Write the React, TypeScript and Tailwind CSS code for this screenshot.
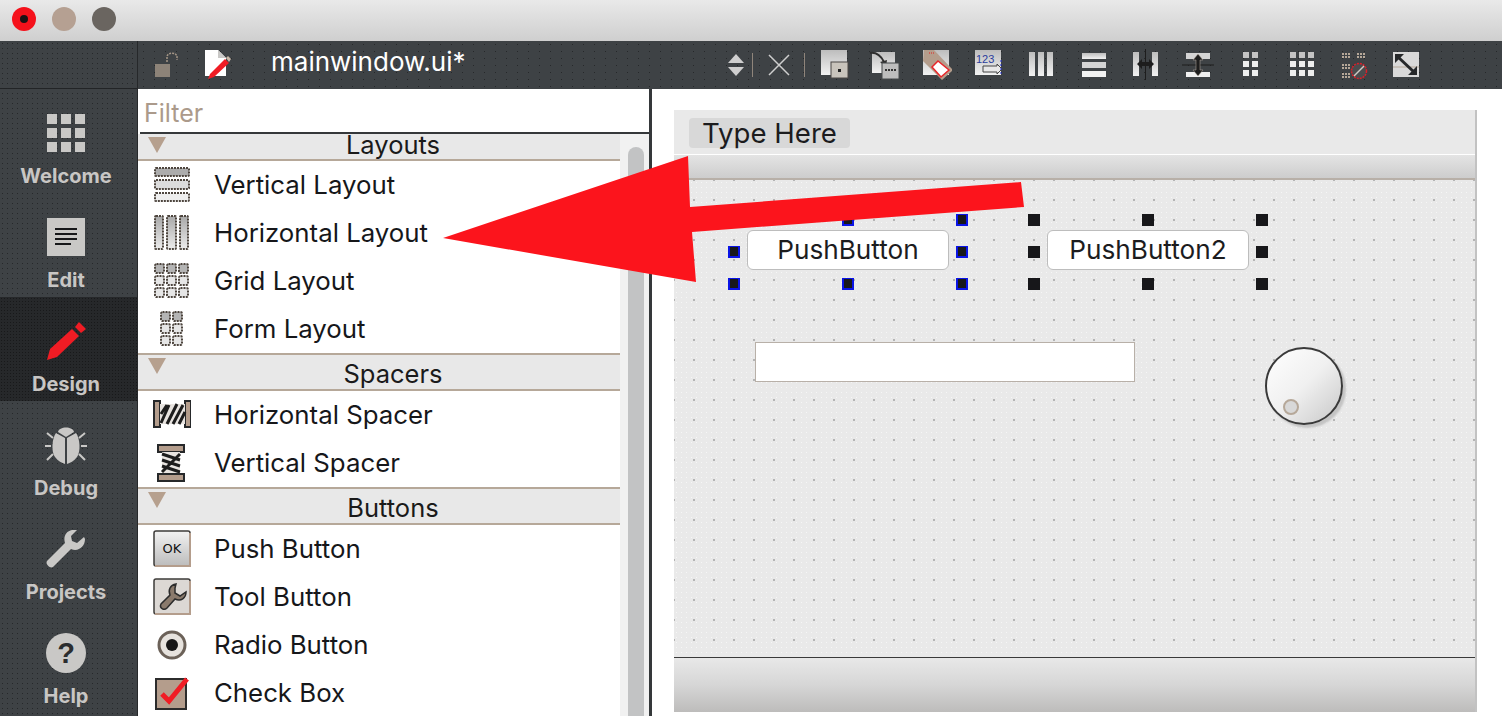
const sans = "font-['Inter','Liberation_Sans',sans-serif]";

function Traffic({ className, children }: { className: string; children?: React.ReactNode }) {
  return <div className={`flex h-6 w-6 items-center justify-center rounded-full ${className}`}>{children}</div>;
}

/* sidebar icons */
function WelcomeIcon() {
  return (
    <div className="grid h-[38px] w-[38px] grid-cols-3 gap-1">
      {[0, 1, 2, 3, 4, 5, 6, 7, 8].map((i) => (
        <div key={i} className="bg-[#c9c8c6]" />
      ))}
    </div>
  );
}

function EditIcon() {
  return (
    <svg width="38" height="38" viewBox="0 0 38 38">
      <rect width="38" height="38" fill="#c9c8c6" />
      <path d="M8 11h22M8 16h22M8 21h22M8 26h16" stroke="#17181a" strokeWidth="2" />
    </svg>
  );
}

function PencilIcon() {
  return (
    <svg width="40" height="40" viewBox="0 0 40 40">
      <path d="M1 39 L4 28 L26 8 L33 15 L11 36 Z" fill="#f01c24" />
      <path d="M29 6 L33 1 L40 8 L35 12 Z" fill="#f01c24" />
    </svg>
  );
}

function BugIcon() {
  return (
    <svg width="42" height="42" viewBox="0 0 42 42">
      <path d="M13 8 C14 2 28 2 29 8 L21 13 Z" fill="#c9c8c6" />
      <path d="M20 14 L11 9 C7 14 6 28 10 33 C13 37 17 39 20 40 Z" fill="#c9c8c6" />
      <path d="M22 14 L31 9 C35 14 36 28 32 33 C29 37 25 39 22 40 Z" fill="#c9c8c6" />
      <path d="M8 14 L2 9 M6 22 H0 M8 30 L2 36 M34 14 L40 9 M36 22 H42 M34 30 L40 36" stroke="#c9c8c6" strokeWidth="2" />
    </svg>
  );
}

function WrenchIcon() {
  return (
    <svg width="40" height="40" viewBox="0 0 40 40">
      <path
        d="M26 1 C20 2 17 8 19 14 L1 32 C-1 35 4 40 7 38 L25 20 C32 23 39 18 39 10 L38 8 L31 14 L26 12 L25 7 L31 1 Z"
        fill="#c9c8c6"
      />
    </svg>
  );
}

function HelpIcon() {
  return (
    <div className="flex h-10 w-10 items-center justify-center rounded-full bg-[#c9c8c6] font-['Liberation_Sans',sans-serif] text-[29px] leading-none font-bold text-[#2b2d2f]">
      ?
    </div>
  );
}

/* toolbar icons, 32px boxes */
function ToolIcon({ children, className }: { children: React.ReactNode; className: string }) {
  return (
    <div className={`flex shrink-0 justify-center ${className}`}>
      <svg width="32" height="32" viewBox="0 0 32 32">
        <defs>
          <linearGradient id="tb" x1="0" y1="0" x2="0" y2="1">
            <stop offset="0" stopColor="#bdbdbd" />
            <stop offset="1" stopColor="#f2f2f2" />
          </linearGradient>
        </defs>
        {children}
      </svg>
    </div>
  );
}

const toolbarIcons = [
  <>
    <rect x="3" y="1" width="26" height="25" fill="url(#tb)" />
    <rect x="13" y="13" width="17" height="16" fill="#c9c4bc" stroke="#4a4644" />
    <rect x="20" y="20" width="3" height="3" fill="#222" />
  </>,
  <>
    <rect x="3" y="3" width="23" height="21" fill="url(#tb)" />
    <path d="M1 4 C8 3 12 7 15 13" stroke="#2f2f2f" strokeWidth="2" fill="none" />
    <path d="M11 13 L18 11 L17 18 Z" fill="#2f2f2f" />
    <rect x="13" y="14" width="17" height="16" fill="#bdbdbd" stroke="#45484a" />
    <path d="M16 21 H27" stroke="#333" strokeWidth="2" strokeDasharray="2 1" />
  </>,
  <>
    <rect x="3" y="1" width="26" height="25" fill="url(#tb)" />
    <path d="M4 1 H14 L33 21 L22 31 L3 12 Z" fill="#b49d8c" />
    <path d="M9 4 H15" stroke="#e02020" strokeDasharray="1 1" />
    <path d="M18 12 L29 21 L21 28 L12 18 Z" fill="#fff" stroke="#e8262a" strokeWidth="1.5" />
  </>,
  <>
    <rect x="3" y="1" width="26" height="25" fill="url(#tb)" />
    <text x="4" y="14" fontSize="11" fill="#2a3c9c" fontFamily="Liberation Sans">123</text>
    <path d="M11 17 H25 V15 L30 20 L25 25 V23 H11 Z" fill="#e8e8e8" stroke="#444" />
    <path d="M29 11 V25" stroke="#2030d0" strokeDasharray="2 2" />
  </>,
  <>
    <rect x="4" y="3" width="6" height="24" fill="url(#tb)" />
    <rect x="13" y="3" width="6" height="24" fill="url(#tb)" />
    <rect x="22" y="3" width="6" height="24" fill="url(#tb)" />
  </>,
  <>
    <rect x="4" y="4" width="24" height="6" fill="url(#tb)" />
    <rect x="4" y="13" width="24" height="6" fill="#d4d4d4" />
    <rect x="4" y="22" width="24" height="6" fill="#f2f2f2" />
  </>,
  <>
    <rect x="3" y="3" width="6" height="24" fill="url(#tb)" />
    <rect x="22" y="3" width="6" height="24" fill="url(#tb)" />
    <path d="M15.5 0 V31" stroke="#1d1d1d" />
    <path d="M7 15 L12 10 V13 H19 V10 L24 15 L19 20 V17 H12 V20 Z" fill="#1d1d1d" />
  </>,
  <>
    <rect x="4" y="4" width="24" height="6" fill="#d4d4d4" />
    <rect x="4" y="23" width="24" height="5" fill="#f0f0f0" />
    <path d="M0 16 H32" stroke="#1d1d1d" />
    <path d="M16 5 L21 11 H18 V21 H21 L16 27 L11 21 H14 V11 H11 Z" fill="#1d1d1d" stroke="#b8aca0" strokeWidth="0.5" />
  </>,
  <>
    {[3, 12, 21].map((y) =>
      [9, 18].map((x) => <rect key={`${x}-${y}`} x={x} y={y} width="6" height="6" fill={y === 3 ? "#c4c4c4" : "#eeeeee"} />),
    )}
  </>,
  <>
    {[3, 12, 21].map((y) =>
      [4, 13, 22].map((x) => <rect key={`${x}-${y}`} x={x} y={y} width="6" height="6" fill={y === 3 ? "#c4c4c4" : "#eeeeee"} />),
    )}
  </>,
  <>
    <path d="M4 5 H13 M4 8 H13 M19 5 H28 M19 8 H28 M4 16 H13 M4 19 H13 M4 25 H12 M4 28 H12" stroke="#b6a899" strokeWidth="2" strokeDasharray="2 1" />
    <circle cx="21" cy="22" r="7.5" fill="#4a4c4e" stroke="#d8202a" strokeWidth="1.5" strokeDasharray="2 1" />
    <path d="M16 27 L26 17" stroke="#cfcac4" strokeWidth="1.5" />
  </>,
  <>
    <rect x="3" y="3" width="26" height="25" fill="#d9d9d9" />
    <path d="M3 18 H29" stroke="#b6a899" />
    <path d="M7 7 L25 24" stroke="#26282a" strokeWidth="3" />
    <path d="M5 5 H14 L5 14 Z M27 26 H18 L27 17 Z" fill="#26282a" />
  </>,
];

/* palette icons */
const dash = { stroke: "#4d453e", strokeWidth: 2, strokeDasharray: "2 1" };

function PaletteDefs() {
  return (
    <defs>
      <linearGradient id="pal" x1="0" y1="0" x2="0" y2="1">
        <stop offset="0" stopColor="#a8a8a8" />
        <stop offset="1" stopColor="#ececec" />
      </linearGradient>
      <linearGradient id="pal2" x1="0" y1="0" x2="0" y2="1">
        <stop offset="0" stopColor="#f2f2f2" />
        <stop offset="1" stopColor="#bcbcbc" />
      </linearGradient>
    </defs>
  );
}

function CellGrid({ cols }: { cols: number[] }) {
  return (
    <>
      {[2, 14, 26].map((y) =>
        cols.map((x) => (
          <rect key={`${x}-${y}`} x={x} y={y} width="9" height="9" rx="1.5" fill={y === 2 ? "#b4b4b4" : "#e6e6e6"} {...dash} />
        )),
      )}
    </>
  );
}

const paletteIcons: Record<string, React.ReactNode> = {
  vertical: (
    <>
      <rect x="2" y="2" width="34" height="8" rx="1" fill="#acacac" {...dash} />
      <rect x="2" y="14" width="34" height="9" rx="1" fill="#dcdcdc" {...dash} />
      <rect x="2" y="27" width="34" height="8" rx="1" fill="#eeeeee" {...dash} />
    </>
  ),
  horizontal: (
    <>
      <rect x="2" y="2" width="8" height="33" rx="1" fill="url(#pal)" {...dash} />
      <rect x="14" y="2" width="9" height="33" rx="1" fill="url(#pal)" {...dash} />
      <rect x="27" y="2" width="8" height="33" rx="1" fill="url(#pal)" {...dash} />
    </>
  ),
  grid: <CellGrid cols={[2, 14, 26]} />,
  form: <CellGrid cols={[8, 20]} />,
  hspacer: (
    <>
      <rect x="1" y="5" width="6" height="26" fill="#b49d8c" stroke="#26282a" strokeWidth="2" />
      <rect x="32" y="5" width="6" height="26" fill="#b49d8c" stroke="#26282a" strokeWidth="2" />
      <path d="M7 8 H32 V28 H7 Z" fill="#e8e4e0" />
      <path d="M8 27 L16 9 M8 18 L14 9 M14 28 L24 8 M20 28 L30 9 M26 28 L32 16" stroke="#1d1d1d" strokeWidth="3" />
    </>
  ),
  vspacer: (
    <>
      <rect x="5" y="1" width="26" height="7" fill="#b49d8c" stroke="#26282a" strokeWidth="2" />
      <rect x="5" y="30" width="26" height="7" fill="#b49d8c" stroke="#26282a" strokeWidth="2" />
      <path d="M9 8 H27 V29 H9 Z" fill="#e8e4e0" />
      <path d="M9 10 L27 16 M9 16 L27 22 M9 22 L27 28 M9 28 L27 10" stroke="#1d1d1d" strokeWidth="3" />
    </>
  ),
  push: (
    <>
      <rect x="1" y="1" width="36" height="35" rx="2" fill="url(#pal2)" stroke="#3d3b39" strokeWidth="1.5" />
      <path d="M2 36 H37 V3" stroke="#b49d8c" strokeWidth="2" fill="none" />
      <text x="19" y="23" fontSize="13" textAnchor="middle" fill="#111" fontFamily="DejaVu Sans">OK</text>
    </>
  ),
  tool: (
    <>
      <rect x="1" y="1" width="36" height="35" rx="2" fill="#dcd8d4" stroke="#3d3b39" strokeWidth="1.5" />
      <path d="M2 36 H37 V3" stroke="#b49d8c" strokeWidth="2" fill="none" />
      <path d="M23 6 C17 7 15 12 17 17 L8 26 C6 30 11 33 14 30 L22 21 C28 24 33 20 33 14 L27 18 L22 15 L22 10 Z" fill="#8a7a6c" stroke="#2c2c2c" strokeWidth="1.5" />
    </>
  ),
  radio: (
    <>
      <circle cx="19" cy="19" r="13" fill="#e6e2dd" stroke="#6b6158" strokeWidth="3" />
      <circle cx="19" cy="19" r="6" fill="#161616" />
    </>
  ),
  check: (
    <>
      <rect x="3" y="5" width="30" height="30" fill="#b49d8c" stroke="#2c2c2c" strokeWidth="2" />
      <path d="M9 20 L16 27 L34 5" stroke="#f01c24" strokeWidth="5" fill="none" />
    </>
  ),
};

function PaletteItem({ icon, label }: { icon: string; label: string }) {
  return (
    <div className="flex h-12 items-center">
      <div className="flex w-[68px] shrink-0 justify-center">
        <svg width="38" height="38" viewBox="0 0 38 38">
          <PaletteDefs />
          {paletteIcons[icon]}
        </svg>
      </div>
      <span className="ml-[8px] text-[25.8px] leading-none text-[#16171a]">{label}</span>
    </div>
  );
}

function SectionHeader({ label, first }: { label: string; first?: boolean }) {
  return (
    <div
      className={`relative flex items-center justify-center border-b-2 border-[#b6a899] bg-[#e8e8e8] pl-[28px] text-[25.5px] leading-none text-[#1a1a1a] ${
        first ? "h-[27px] pb-[4px]" : "h-[38px] border-t-2 pt-[3px]"
      }`}
    >
      <svg className="absolute top-[3px] left-[10px]" width="18" height="16" viewBox="0 0 18 16">
        <path d="M0 0 H18 L9 16 Z" fill="#b6a08e" />
      </svg>
      {label}
    </div>
  );
}

function SideItem({ label, active, children }: { label: string; active?: boolean; children: React.ReactNode }) {
  return (
    <div
      className={`flex h-[104px] flex-col items-center justify-start pt-[24px] pr-[5px] ${
        active ? "bg-[#26282a] bg-[radial-gradient(#18191a_0.6px,transparent_0.8px)] bg-size-[3px_3px]" : ""
      }`}
    >
      <div className="flex h-[40px] items-center justify-center">{children}</div>
      <span className="mt-[11px] text-[20px] leading-[24px] font-bold text-[#c8c6c4]">{label}</span>
    </div>
  );
}

function Handle({ x, y, blue }: { x: number; y: number; blue?: boolean }) {
  return (
    <div
      className={`absolute h-3 w-3 bg-[#17171a] ${blue ? "border-2 border-t border-[#0a14e6]" : ""}`}
      style={{ left: x - 6, top: y - 6 }}
    />
  );
}

function FormButton({ className, label }: { className: string; label: string }) {
  return (
    <div className={`absolute flex h-10 items-center justify-center rounded-md border border-[#bdbdbd] bg-white text-[26.2px] leading-none text-[#1c1c1e] ${className}`}>
      {label}
    </div>
  );
}

export default function App() {
  const handleXs = [734, 848, 962];
  const handleXs2 = [1034, 1148, 1262];
  const handleYs = [220, 252, 284];
  // selection handles sit on the box corners and edge midpoints, never the centre
  const onBox = (x: number, y: number, xs: number[]) => !(x === xs[1] && y === handleYs[1]);

  return (
    <div className={`relative flex h-[716px] w-[1502px] flex-col overflow-hidden bg-white ${sans}`}>
      {/* Title bar */}
      <div className="flex h-[41px] shrink-0 items-start gap-4 bg-gradient-to-b from-[#e9e9e9] to-[#cfcfcf] pt-[7px] pl-3">
        <Traffic className="bg-[#f5111b]">
          <div className="h-2 w-2 rounded-full bg-[#1c1214]" />
        </Traffic>
        <Traffic className="bg-[#b5a092]" />
        <Traffic className="bg-[#6a6560]" />
      </div>

      <div className="flex min-h-0 flex-1">
        {/* Mode sidebar */}
        <div className="w-[137px] shrink-0 bg-[#3e4245] bg-[radial-gradient(#26282a_0.6px,transparent_0.8px)] bg-size-[5px_5px]">
          <div className="h-12 border-b border-[#222426]" />
          <SideItem label="Welcome">
            <WelcomeIcon />
          </SideItem>
          <SideItem label="Edit">
            <EditIcon />
          </SideItem>
          <SideItem label="Design" active>
            <PencilIcon />
          </SideItem>
          <SideItem label="Debug">
            <BugIcon />
          </SideItem>
          <SideItem label="Projects">
            <WrenchIcon />
          </SideItem>
          <SideItem label="Help">
            <HelpIcon />
          </SideItem>
        </div>

        <div className="flex min-w-0 flex-1 flex-col border-l border-[#26282a]">
          {/* Toolbar */}
          <div className="flex h-12 shrink-0 items-center bg-[#3e4245] bg-[radial-gradient(#26282a_0.7px,transparent_0.9px)] bg-size-[11px_7px]">
            <svg className="ml-[16px]" width="24" height="26" viewBox="0 0 24 26">
              <rect x="1" y="12" width="15" height="13" fill="#8d8378" />
              <path d="M4 12 V8 C4 5 13 5 13 8 V12" stroke="#3e4245" fill="none" />
              <path d="M13 10 V5 C13 0 23 0 23 5 V8" stroke="#a59687" strokeWidth="1.5" strokeDasharray="2 1" fill="none" />
            </svg>
            <svg className="ml-[26px]" width="28" height="30" viewBox="0 0 28 30">
              <path d="M1 0 H14 L22 8 V26 H1 Z" fill="#ffffff" />
              <path d="M14 0 V8 H22 Z" fill="#c9c8c6" />
              <path d="M4 29 L6 24 L21 9 L25 13 L10 27 Z" fill="#f01c24" />
              <path d="M22 8 L24 6 L27 9 L25 12 Z" fill="#c9b8a8" />
            </svg>
            <span className="ml-[39px] w-[188px] shrink-0 -translate-y-[3px] text-[26px] leading-none whitespace-nowrap text-white">
              mainwindow.ui*
            </span>
            <svg className="ml-[269px]" width="16" height="24" viewBox="0 0 16 24">
              <path d="M8 1 L16 10 H0 Z" fill="#cfcfcf" />
              <path d="M0 14 H16 L8 23 Z" fill="#cfcfcf" />
            </svg>
            <div className="ml-[8px] h-6 w-px bg-[#8f857b]" />
            <svg className="ml-[15px]" width="22" height="22" viewBox="0 0 22 22">
              <path d="M1 1 L21 21 M21 1 L1 21" stroke="#cfcfcf" strokeWidth="1.5" />
            </svg>
            <div className="ml-[14px] h-6 w-px bg-[#8f857b]" />
            <div className="ml-[3px] flex">
              {toolbarIcons.map((icon, i) => (
                <ToolIcon key={i} className={i < 3 ? "w-[51px]" : i < 6 ? "w-[53px]" : "w-[52px]"}>
                  {icon}
                </ToolIcon>
              ))}
            </div>
          </div>

          <div className="flex min-h-0 flex-1">
            {/* Widget box */}
            <div className="flex w-[514px] shrink-0 flex-col border-r-[3px] border-[#35383a] bg-white">
              <div className="mt-[2px] ml-[2px] flex h-[43px] shrink-0 items-center border-b-[2px] border-[#35383a] pt-[4px] pl-[4px] text-[25px] leading-none text-[#ab9a8b]">
                Filter
              </div>
              <div className="flex min-h-0 flex-1">
                <div className="w-[482px] shrink-0">
                  <SectionHeader label="Layouts" first />
                  <PaletteItem icon="vertical" label="Vertical Layout" />
                  <PaletteItem icon="horizontal" label="Horizontal Layout" />
                  <PaletteItem icon="grid" label="Grid Layout" />
                  <PaletteItem icon="form" label="Form Layout" />
                  <SectionHeader label="Spacers" />
                  <PaletteItem icon="hspacer" label="Horizontal Spacer" />
                  <PaletteItem icon="vspacer" label="Vertical Spacer" />
                  <SectionHeader label="Buttons" />
                  <PaletteItem icon="push" label="Push Button" />
                  <PaletteItem icon="tool" label="Tool Button" />
                  <PaletteItem icon="radio" label="Radio Button" />
                  <PaletteItem icon="check" label="Check Box" />
                </div>
                {/* Scrollbar */}
                <div className="flex-1 bg-[#f1f1f1] pt-[13px] pl-[8px]">
                  <div className="h-full w-[16px] rounded-t-lg bg-[#c2c3c4]" />
                </div>
              </div>
            </div>

            {/* Form canvas */}
            <div className="min-w-0 flex-1 pt-[21px] pl-[22px]">
              <div className="flex h-[602px] w-[803px] flex-col border-r-2 border-[#c2c2c2] bg-[#e9e9e9]">
                <div className="flex h-[45px] shrink-0 items-start border-b border-white pt-[8px] pl-[15px]">
                  <div className="flex h-[30px] w-[161px] items-center rounded-sm bg-[#d8d8d8] pt-px pl-[13px] text-[27.6px] leading-none text-[#1c1c1e]">
                    Type Here
                  </div>
                </div>
                <div className="h-[25px] shrink-0 border-b-2 border-[#b8b0a8] bg-gradient-to-b from-[#e4e4e4] to-[#cdcdcd]" />
                <div className="min-h-0 flex-1 bg-[radial-gradient(circle,#b4b4b4_1.2px,transparent_1.3px),radial-gradient(circle,#f6f6f6_0.7px,transparent_0.9px)] bg-size-[20px_20px,5px_5px] bg-position-[10px_10px,0_0]" />
                <div className="h-[55px] shrink-0 border-t border-[#3a3a3a] bg-gradient-to-b from-[#e8e8e8] via-[#d6d6d6] to-[#bdbcbb]" />
              </div>
            </div>
          </div>
        </div>
      </div>

      {/* Designer widgets on the form */}
      <FormButton className="top-[230px] left-[747px] w-[202px]" label="PushButton" />
      <FormButton className="top-[230px] left-[1047px] w-[202px]" label="PushButton2" />
      {handleYs.map((y) =>
        handleXs.filter((x) => onBox(x, y, handleXs)).map((x) => <Handle key={`${x}-${y}`} x={x} y={y} blue />),
      )}
      {handleYs.map((y) =>
        handleXs2.filter((x) => onBox(x, y, handleXs2)).map((x) => <Handle key={`${x}-${y}`} x={x} y={y} />),
      )}
      <div className="absolute top-[342px] left-[755px] h-10 w-[380px] border border-[#b8b0a8] bg-white" />
      <div className="absolute top-[347px] left-[1265px] h-[78px] w-[78px] rounded-full border-2 border-[#3a3a3a] bg-gradient-to-br from-white via-[#f0f0f0] to-[#c8c8c8] shadow-[3px_3px_2px_#c4c4c4]">
        <div className="absolute top-[50px] left-[16px] h-4 w-4 rounded-full border-2 border-[#b6a899] bg-[#d8d8d8]" />
      </div>

      {/* Annotation arrow */}
      <svg className="absolute top-0 left-0" width="1502" height="716" viewBox="0 0 1502 716">
        <path d="M443 238 L688 156 L690 207 L1021 182 L1024 207 L692 232 L696 282 Z" fill="#fc141c" />
      </svg>
    </div>
  );
}
